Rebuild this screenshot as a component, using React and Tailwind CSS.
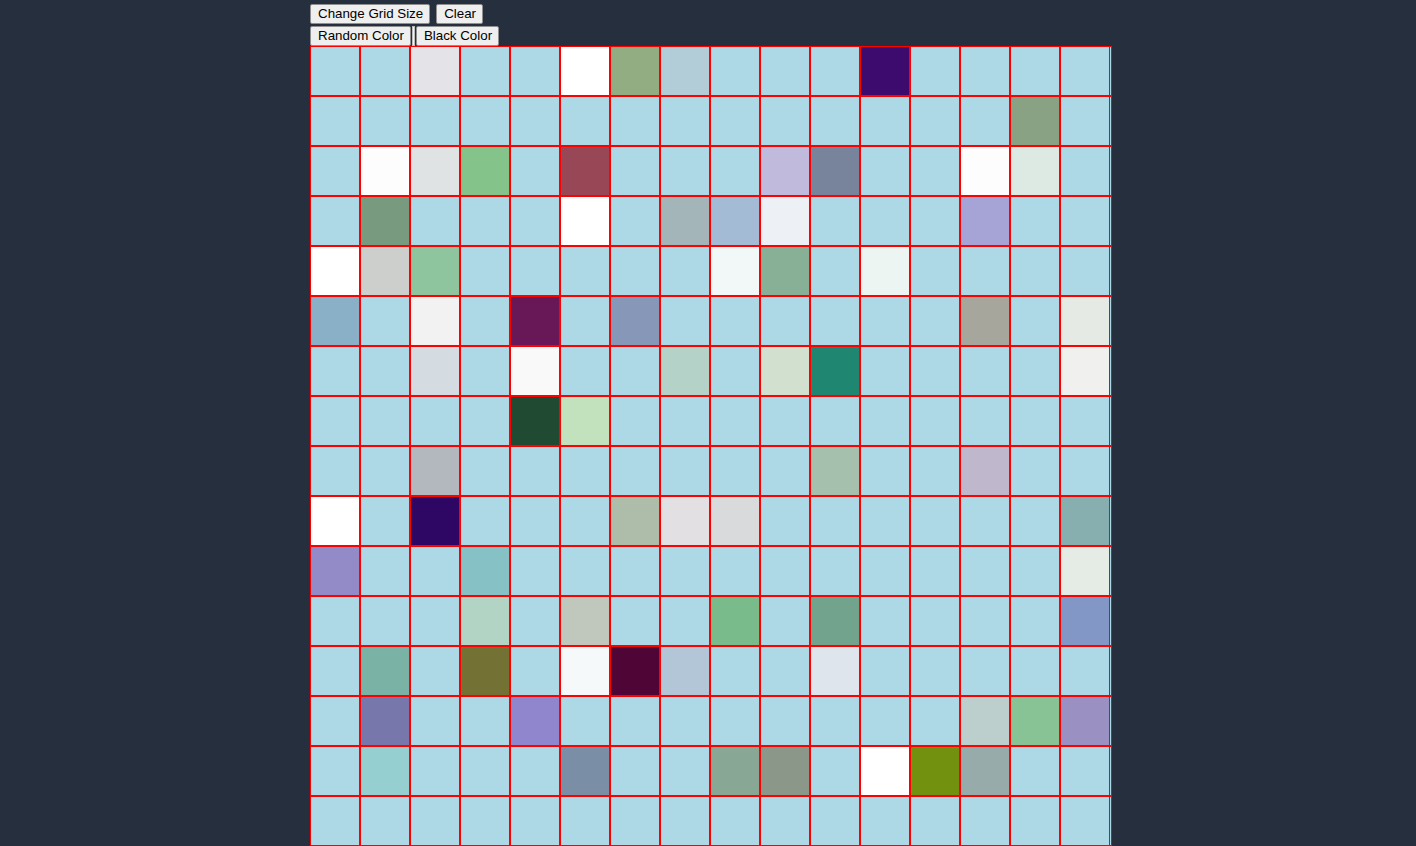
import React from "react";

const LB = "#add8e6";
const colored = {
  "0-2": "#e4e4e8", "0-5": "#ffffff", "0-6": "#93ad83", "0-7": "#b3cdd8", "0-11": "#3d0a6e",
  "1-14": "#8aa284",
  "2-1": "#fdfdfd", "2-2": "#e0e3e3", "2-3": "#84c38a", "2-5": "#974755", "2-9": "#c0bbdc", "2-10": "#77849c", "2-13": "#fefdfe", "2-14": "#dde9e3",
  "3-1": "#789a7e", "3-5": "#ffffff", "3-7": "#a3b5b9", "3-8": "#a3bbd4", "3-9": "#edf0f5", "3-13": "#a6a3d6",
  "4-0": "#ffffff", "4-1": "#cdcfcd", "4-2": "#8ec49e", "4-8": "#f2f7f7", "4-9": "#87b097", "4-11": "#edf5f3",
  "5-0": "#8ab0c8", "5-2": "#f1f2f1", "5-4": "#681857", "5-6": "#8797b8", "5-13": "#a6a69c", "5-15": "#e5ebe4",
  "6-2": "#d4dbe1", "6-4": "#f8f9f8", "6-7": "#b5d2c8", "6-9": "#d2e0d0", "6-10": "#1f8672", "6-15": "#f0f1ee",
  "7-4": "#214a33", "7-5": "#c2e2be",
  "8-2": "#b2b8bd", "8-10": "#a5c0ac", "8-13": "#bfb8cd",
  "9-0": "#ffffff", "9-2": "#2e0764", "9-6": "#adbdaa", "9-7": "#e2e0e3", "9-8": "#d8dadb", "9-15": "#87afaf",
  "10-0": "#928bc8", "10-3": "#86c1c6", "10-15": "#e4ece5",
  "11-3": "#b1d4c4", "11-5": "#c0c8be", "11-8": "#79bb8b", "11-10": "#72a38c", "11-15": "#8297c6",
  "12-1": "#7ab2a6", "12-3": "#737234", "12-5": "#f6f9fa", "12-6": "#4f0535", "12-7": "#b2c6d8", "12-10": "#dfe5ec",
  "13-1": "#7777ab", "13-4": "#8f86cd", "13-13": "#bccfcc", "13-14": "#88c395", "13-15": "#9a90c2",
  "14-1": "#96cfcf", "14-5": "#7a8ea6", "14-8": "#88a795", "14-9": "#8a9789", "14-11": "#ffffff", "14-12": "#72910f", "14-13": "#98abab",
};

const btn =
  "h-[20px] pl-[7px] pr-[6px] border border-[#8f8f8f] rounded-[2px] bg-[#efefef] text-[13.33px] leading-[16px] text-black font-['Liberation_Sans',Arial,sans-serif]";

export default function App() {
  const rows = Array.from({ length: 16 }, (_, r) => r);
  const cols = Array.from({ length: 16 }, (_, c) => c);
  return (
    <div className="w-[1416px] h-[846px] overflow-hidden bg-[#252f3e] pl-[310px] pt-[4px] font-['Liberation_Sans',Arial,sans-serif]">
      <div className="flex gap-[6px]">
        <button className={btn}>Change Grid Size</button>
        <button className={btn}>Clear</button>
      </div>
      <div className="flex items-center mt-[2px] h-[20px]">
        <button className={btn}>Random Color</button>
        <div className="w-[3px] h-[20px] mx-[1px] bg-[#f4f4f4] border border-[#bdbdbd]" />
        <button className={btn}>Black Color</button>
      </div>
      <div className="flex flex-col">
        {rows.map((r) => (
          <div key={r} className="flex">
            {cols.map((c) => (
              <div
                key={c}
                className="w-[50px] h-[50px] border border-[#ff0000] shrink-0"
                style={{ backgroundColor: colored[`${r}-${c}`] || LB }}
              />
            ))}
            <div className="w-[2px] h-[50px] border-y border-r border-[#ff0000] bg-[#add8e6] shrink-0" />
          </div>
        ))}
      </div>
    </div>
  );
}
